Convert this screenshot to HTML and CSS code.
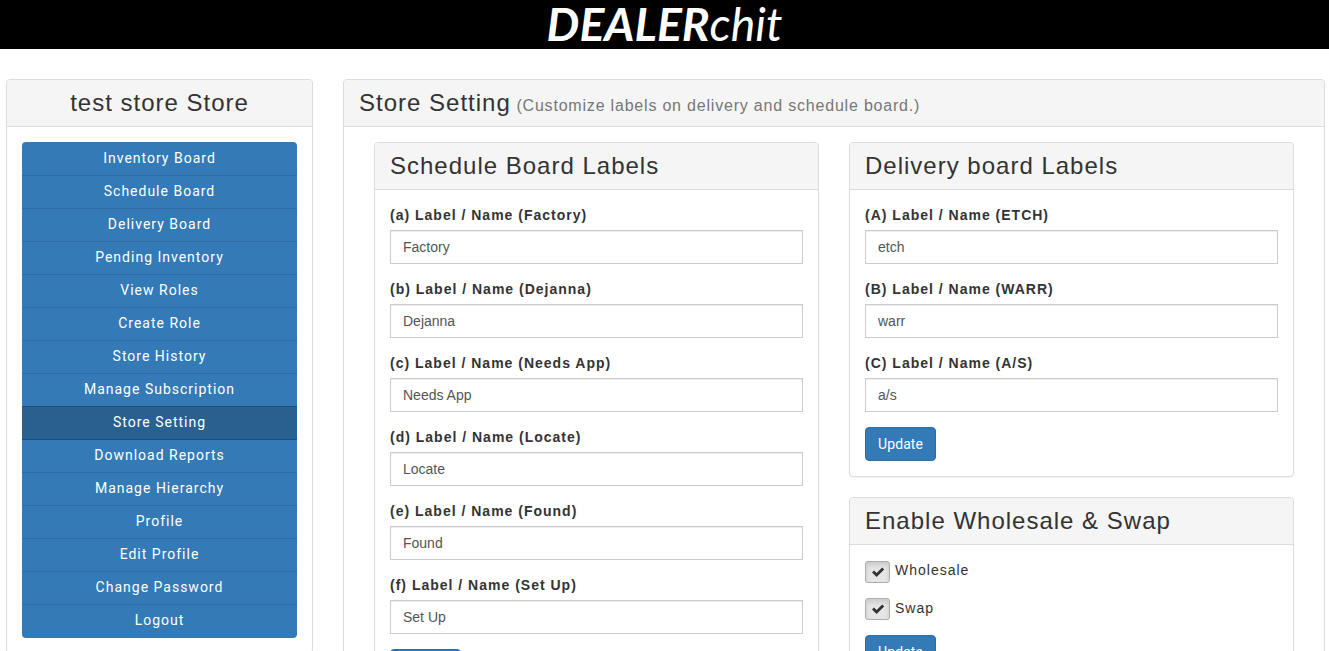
FILE: index.html
```html
<!DOCTYPE html>
<html lang="en">
<head>
    <meta charset="UTF-8">
    <meta name="viewport" content="width=device-width, initial-scale=1.0">
    <title>Store Setting</title>
    <link rel="stylesheet" href="styles.css">
</head>
<body>
    <header class="topbar">
        <div class="logo"><b>DEALER</b>chit</div>
    </header>

    <div class="page">
        <aside class="panel sidebar">
            <div class="panel-heading"><h3 class="store-name">test store Store</h3></div>
            <div class="panel-body">
                <nav class="menu">
                    <a href="#">Inventory Board</a>
                    <a href="#">Schedule Board</a>
                    <a href="#">Delivery Board</a>
                    <a href="#">Pending Inventory</a>
                    <a href="#">View Roles</a>
                    <a href="#">Create Role</a>
                    <a href="#">Store History</a>
                    <a href="#">Manage Subscription</a>
                    <a href="#" class="active">Store Setting</a>
                    <a href="#">Download Reports</a>
                    <a href="#">Manage Hierarchy</a>
                    <a href="#">Profile</a>
                    <a href="#">Edit Profile</a>
                    <a href="#">Change Password</a>
                    <a href="#">Logout</a>
                </nav>
            </div>
        </aside>

        <main class="panel content">
            <div class="panel-heading">
                <h3>Store Setting <small>(Customize labels on delivery and schedule board.)</small></h3>
            </div>
            <div class="panel-body columns">
                <div class="column">
                    <section class="panel">
                        <div class="panel-heading"><h3>Schedule Board Labels</h3></div>
                        <form class="panel-body">
                            <div class="field">
                                <label>(a) Label / Name (Factory)</label>
                                <input type="text" value="Factory">
                            </div>
                            <div class="field">
                                <label>(b) Label / Name (Dejanna)</label>
                                <input type="text" value="Dejanna">
                            </div>
                            <div class="field">
                                <label>(c) Label / Name (Needs App)</label>
                                <input type="text" value="Needs App">
                            </div>
                            <div class="field">
                                <label>(d) Label / Name (Locate)</label>
                                <input type="text" value="Locate">
                            </div>
                            <div class="field">
                                <label>(e) Label / Name (Found)</label>
                                <input type="text" value="Found">
                            </div>
                            <div class="field">
                                <label>(f) Label / Name (Set Up)</label>
                                <input type="text" value="Set Up">
                            </div>
                            <button type="button" class="btn">Update</button>
                        </form>
                    </section>
                </div>

                <div class="column">
                    <section class="panel">
                        <div class="panel-heading"><h3>Delivery board Labels</h3></div>
                        <form class="panel-body">
                            <div class="field">
                                <label>(A) Label / Name (ETCH)</label>
                                <input type="text" value="etch">
                            </div>
                            <div class="field">
                                <label>(B) Label / Name (WARR)</label>
                                <input type="text" value="warr">
                            </div>
                            <div class="field">
                                <label>(C) Label / Name (A/S)</label>
                                <input type="text" value="a/s">
                            </div>
                            <button type="button" class="btn">Update</button>
                        </form>
                    </section>

                    <section class="panel">
                        <div class="panel-heading"><h3>Enable Wholesale &amp; Swap</h3></div>
                        <form class="panel-body checks">
                            <div class="check">
                                <span class="check-box"><svg viewBox="0 0 14 12" width="14" height="12"><path d="M1 6.5l2-2 2.6 2.6L11.2 1.4l2 2-7.6 7.6z" fill="#333"/></svg></span>
                                <span class="check-label">Wholesale</span>
                            </div>
                            <div class="check">
                                <span class="check-box"><svg viewBox="0 0 14 12" width="14" height="12"><path d="M1 6.5l2-2 2.6 2.6L11.2 1.4l2 2-7.6 7.6z" fill="#333"/></svg></span>
                                <span class="check-label">Swap</span>
                            </div>
                            <button type="button" class="btn">Update</button>
                        </form>
                    </section>
                </div>
            </div>
        </main>
    </div>
</body>
</html>
```

FILE: styles.css
```css
* {
    box-sizing: border-box;
}

body {
    margin: 0;
    font-family: "Liberation Sans", Arial, sans-serif;
    font-size: 14px;
    line-height: 1.42857;
    letter-spacing: 1px;
    color: #333;
    background-color: #fff;
}

.topbar {
    height: 49px;
    background-color: #000;
    text-align: center;
}

.logo {
    font-family: Lato, sans-serif;
    font-style: italic;
    font-size: 46.4px;
    line-height: 46px;
    letter-spacing: 0;
    color: #fff;
}

.page {
    display: flex;
    align-items: flex-start;
    gap: 30px;
    padding: 30px 4px 0 6px;
}

.panel {
    background: #fff;
    border: 1px solid #ddd;
    border-radius: 4px;
    box-shadow: 0 1px 1px rgba(0, 0, 0, 0.05);
    margin-bottom: 20px;
}

.panel-heading {
    height: 47px;
    padding: 10px 15px;
    background-color: #f5f5f5;
    border-bottom: 1px solid #ddd;
    border-radius: 3px 3px 0 0;
}

.panel-heading h3 {
    margin: 0;
    font-size: 24px;
    font-weight: 400;
    line-height: 26px;
    color: #333;
}

.panel-heading small {
    font-size: 16px;
    letter-spacing: 0.8px;
    color: #777;
    margin-left: -2px;
}

.panel-body {
    padding: 15px;
}

.sidebar {
    flex: 0 0 307px;
}

.store-name {
    text-align: center;
}

.menu {
    display: flex;
    flex-direction: column;
    padding-top: 1px;
    border-radius: 4px;
    overflow: hidden;
    background-color: #337ab7;
}

.menu a {
    height: 33px;
    font-family: Roboto, sans-serif;
    line-height: 31px;
    font-weight: 400;
    text-align: center;
    text-decoration: none;
    color: #fff;
    border-bottom: 1px solid #2e6da4;
}

.menu a:last-child {
    border-bottom: none;
}

.menu a.active {
    height: 34px;
    margin-top: -1px;
    line-height: 30px;
    background-color: #286090;
    border-top: 1px solid #204d74;
    border-bottom: 1px solid #204d74;
}

.content {
    flex: 1;
}

.columns {
    display: flex;
    gap: 30px;
    padding: 15px 30px 0;
}

.column {
    flex: 1;
    min-width: 0;
}

.field {
    margin-bottom: 15px;
}

.field label {
    display: block;
    height: 25px;
    padding-top: 1px;
    font-weight: 700;
}

.field input {
    display: block;
    width: 100%;
    height: 34px;
    padding: 6px 12px;
    font-family: "Liberation Sans", Arial, sans-serif;
    font-size: 14px;
    color: #555;
    background: #fff;
    border: 1px solid #ccc;
    box-shadow: inset 0 1px 1px rgba(0, 0, 0, 0.075);
}

.btn {
    display: inline-block;
    height: 34px;
    padding: 6px 12px;
    font-family: Roboto, sans-serif;
    font-size: 14px;
    font-weight: 400;
    letter-spacing: 0.1px;
    color: #fff;
    background-color: #337ab7;
    border: 1px solid #2e6da4;
    border-radius: 4px;
}

.checks {
    padding-top: 16px;
}

.check {
    display: flex;
    align-items: flex-start;
    gap: 5px;
    height: 37px;
}

.check-box {
    display: flex;
    align-items: center;
    justify-content: center;
    width: 25px;
    height: 22px;
    background-color: #e6e6e6;
    border: 1px solid #adadad;
    border-radius: 3px;
    box-shadow: inset 0 3px 5px rgba(0, 0, 0, 0.125);
}

.check-label {
    line-height: 20px;
}

.check:first-child .check-label {
    margin-top: -1px;
}
```
